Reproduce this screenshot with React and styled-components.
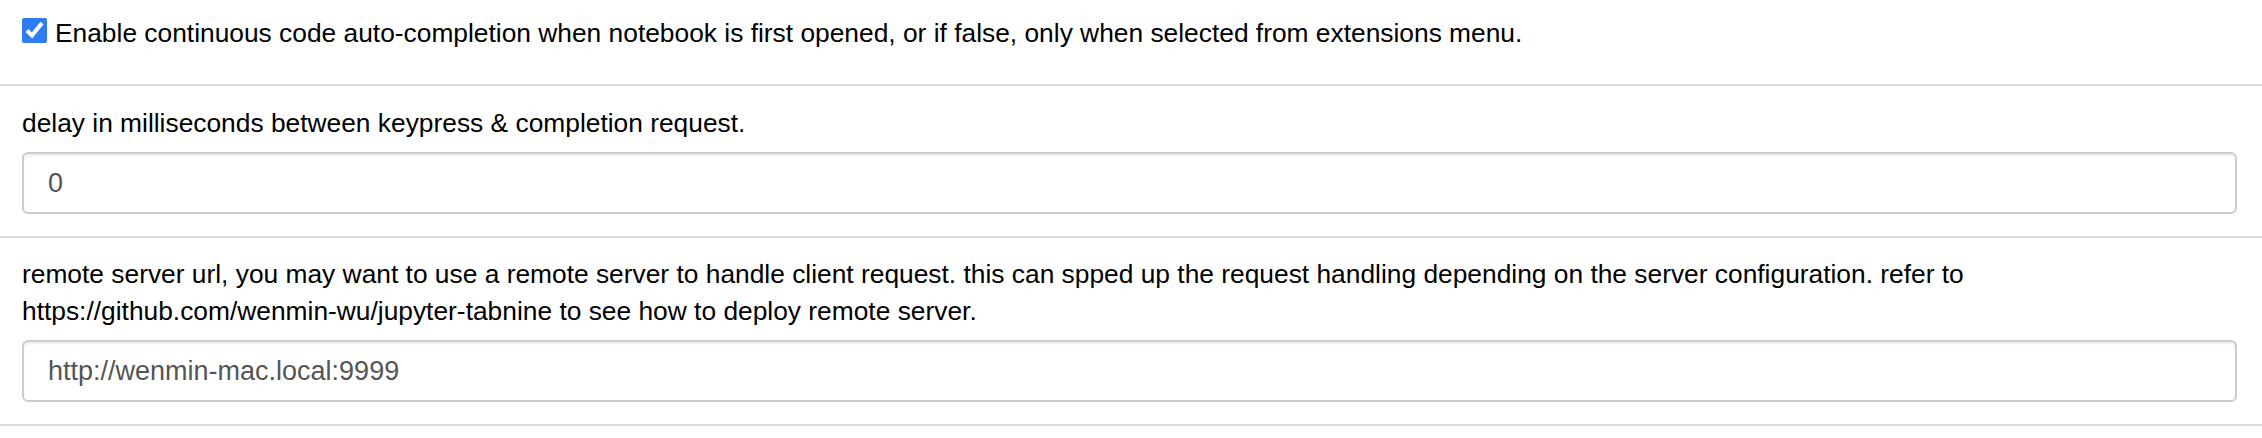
import React from "react";
import styled, { createGlobalStyle } from "styled-components";

const GlobalStyle = createGlobalStyle`
  html, body {
    margin: 0;
    padding: 0;
    background: #fff;
  }
  body {
    font-family: "Liberation Sans", Arial, Helvetica, sans-serif;
    font-size: 26.35px;
    line-height: 37px;
    color: #000;
  }
  * { box-sizing: border-box; }
`;

const Panel = styled.div`
  display: flex;
  flex-direction: column;
  width: 100%;
`;

const Row = styled.div`
  display: flex;
  flex-direction: column;
  padding: ${(p) => p.$top}px 25px ${(p) => p.$bottom}px 22px;
  border-bottom: 2px solid #dddddd;
`;

const CheckLabel = styled.label`
  display: flex;
  align-items: flex-start;
  cursor: pointer;
`;

const Check = styled.input`
  width: 25px;
  height: 25px;
  margin: 3px 8px 0 0;
  flex: 0 0 auto;
  accent-color: #2f7cf6;
`;

const Label = styled.label`
  display: block;
  margin-bottom: 10px;
`;

const TextInput = styled.input`
  display: block;
  width: 100%;
  height: 62px;
  padding: 0 24px;
  font-family: inherit;
  font-size: 27px;
  color: #555;
  background: #fff;
  border: 2px solid #cccccc;
  border-radius: 6px;
  box-shadow: inset 0 2px 2px rgba(0, 0, 0, 0.075);
  outline: none;
`;

export default function App() {
  return (
    <>
      <GlobalStyle />
      <Panel>
        <Row $top={15} $bottom={32}>
          <CheckLabel>
            <Check type="checkbox" defaultChecked />
            <span>
              Enable continuous code auto-completion when notebook is first opened, or if false, only when selected from extensions menu.
            </span>
          </CheckLabel>
        </Row>
        <Row $top={19} $bottom={22}>
          <Label>delay in milliseconds between keypress &amp; completion request.</Label>
          <TextInput type="text" defaultValue="0" />
        </Row>
        <Row $top={18} $bottom={22}>
          <Label>
            remote server url, you may want to use a remote server to handle client request. this can spped up the request handling depending on the server configuration. refer to https://github.com/wenmin-wu/jupyter-tabnine to see how to deploy remote server.
          </Label>
          <TextInput type="text" defaultValue="http://wenmin-mac.local:9999" />
        </Row>
      </Panel>
    </>
  );
}
